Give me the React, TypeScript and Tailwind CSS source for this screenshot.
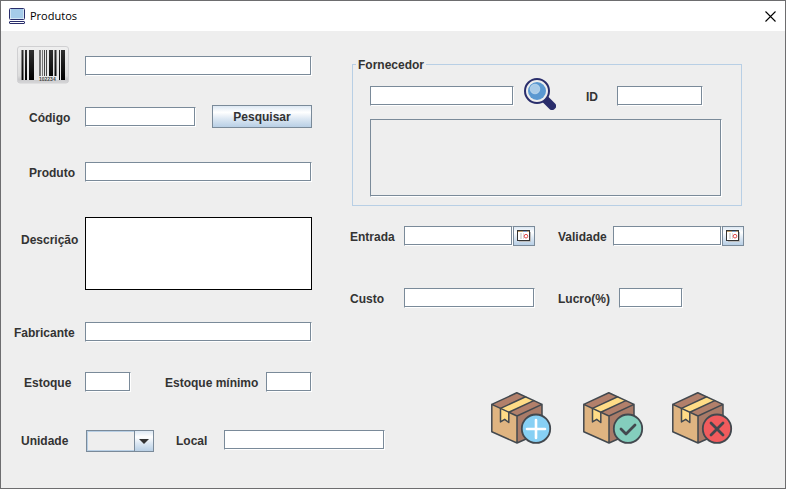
import type { ComponentProps, ReactNode } from "react";

const face =
  "bg-[linear-gradient(to_bottom,#dde8f3_0%,#ffffff_30%,#dde8f3_60%,#b8cfe5_100%)] border border-[#7a8a99]";

const etched =
  "border border-t-[#7a8a99] border-l-[#7a8a99] border-r-white border-b-white shadow-[inset_-1px_-1px_0_#7a8a99]";

function Field({ className = "", ...rest }: ComponentProps<"input">) {
  return (
    <input
      type="text"
      className={`block h-5 min-w-0 rounded-none bg-white px-1 outline-none ${etched} ${className}`}
      {...rest}
    />
  );
}

function Label({ htmlFor, className = "", children }: { htmlFor: string; className?: string; children: ReactNode }) {
  return (
    <label htmlFor={htmlFor} className={`block h-5 shrink-0 leading-[22px] whitespace-nowrap ${className}`}>
      {children}
    </label>
  );
}

function ComputerIcon() {
  return (
    <svg width="16" height="16" viewBox="0 0 16 16" aria-hidden="true">
      <rect x="0.5" y="0.5" width="15" height="11" rx="1" fill="#fff" stroke="#292d6b" />
      <rect x="1.5" y="1" width="13" height="9.5" fill="#a5cbe9" />
      <rect x="0.5" y="13.5" width="15" height="2" rx="0.5" fill="#fff" stroke="#292d6b" />
    </svg>
  );
}

function BarcodeIcon() {
  return (
    <svg width="52" height="40" viewBox="0 0 52 40" className="block shrink-0" role="img" aria-label="Código de barras">
      <defs>
        <linearGradient id="plate" x1="0" y1="0" x2="0" y2="1">
          <stop offset="0" stopColor="#f0f0f0" />
          <stop offset="0.8" stopColor="#dcdcdc" />
          <stop offset="0.9" stopColor="#c8c8ca" />
          <stop offset="1" stopColor="#d8d8da" />
        </linearGradient>
        <linearGradient id="bars" x1="0" y1="4" x2="0" y2="34" gradientUnits="userSpaceOnUse">
          <stop offset="0" stopColor="#303030" />
          <stop offset="1" stopColor="#000" />
        </linearGradient>
      </defs>
      <rect x="0.5" y="0.5" width="51" height="36.5" rx="2.5" fill="url(#plate)" stroke="#d0d0d2" />
      <path d="M4 4h44v30H4z" fill="#e8e8e8" />
      <path
        d="M4.5 4h2v30h-2zM8 4h2v30H8zM12 4h5v30h-5zM32 4h4v26h-4zM37.5 4h2v26h-2zM42 4h1v30h-1zM44 4h4v30h-4z"
        fill="url(#bars)"
      />
      <path d="M22 4h2v26h-2zM25 4h1v26h-1z" fill="#777" />
      <path d="M27 4h1v26h-1zM29 4h1v26h-1z" fill="#444" />
      <text x="22" y="35" fontSize="5" fontWeight="bold" fill="#444">
        102234
      </text>
    </svg>
  );
}

function MagnifierIcon() {
  return (
    <svg width="32" height="32" viewBox="0 0 32 32" aria-hidden="true">
      <path d="M21.5 21.5L28 28" stroke="#292d6b" strokeWidth="8" strokeLinecap="round" />
      <circle cx="13" cy="13" r="12" fill="#eee" stroke="#292d6b" strokeWidth="2" />
      <circle cx="13" cy="13" r="9" fill="#5a98d1" />
      <circle cx="11" cy="11" r="4.8" fill="#a9cbe8" stroke="#c3dbef" strokeWidth="0.7" />
    </svg>
  );
}

function CalendarIcon() {
  return (
    <svg width="14" height="12" viewBox="0 0 14 12" className="shrink-0" aria-hidden="true">
      <path d="M2 11.5h11.5V2" fill="none" stroke="#bbb" />
      <rect x="0.5" y="0.5" width="12" height="10" fill="#fff" stroke="#333" />
      <path d="M1 1h11v1H1z" fill="#c0a070" />
      <path d="M6 1h4v1H6z" fill="#7a9cc8" />
      <path d="M3 3h2v6H3zM6 3h1v6H6z" fill="#ddd" />
      <circle cx="9" cy="6.2" r="1.8" fill="#fff" stroke="#e04848" />
    </svg>
  );
}

function BoxIcon({ badge, children }: { badge: string; children: ReactNode }) {
  return (
    <svg width="64" height="56" viewBox="0 0 64 56" aria-hidden="true" strokeLinejoin="round" strokeLinecap="round">
      <path d="M2.8 14.4L28 26V53L2.8 41.8z" fill="#dfb481" />
      <path d="M28 26L53 14.4V42L28 53z" fill="#a97b68" />
      <path d="M2.8 14.4L27.8 2.8L53 14.4L28 26z" fill="#b2806b" />
      <path d="M11.5 18.4L36.6 6.8L44.8 10.6L19.8 22.2V32.5l-4.1-3.2-4.2 2.6z" fill="#ffdc86" />
      <g fill="none" stroke="#42484e" strokeWidth="1.5">
        <path d="M2.8 14.4L27.8 2.8L53 14.4V42L28 53L2.8 41.8zL28 26L53 14.4M28 26V53" />
        <path d="M11.5 18.4L36.6 6.8M19.8 22.2L44.8 10.6M11.5 18.4V31.9l4.2-2.6 4.1 3.2V22.2" />
      </g>
      <circle cx="47" cy="38.7" r="14.2" fill={badge} stroke="#42484e" strokeWidth="1.8" />
      {children}
    </svg>
  );
}

function DateField({ id, label, labelClass }: { id: string; label: string; labelClass: string }) {
  return (
    <>
      <Label htmlFor={id} className={labelClass}>
        {label}
      </Label>
      <Field id={id} className="w-0 flex-1" />
      <button
        type="button"
        aria-label={`Escolher data de ${label}`}
        className={`flex h-5 w-[22px] shrink-0 items-center justify-center ${face}`}
      >
        <CalendarIcon />
      </button>
    </>
  );
}

export default function App() {
  return (
    <div className="flex min-h-screen flex-col border border-[#6d6d6f] bg-[#eeeeee] font-['Liberation_Sans',Arial,sans-serif] text-xs font-bold text-[#333333]">
      <header className="flex h-[30px] shrink-0 items-center gap-[5px] bg-white pr-[9px] pl-2 text-black">
        <ComputerIcon />
        <h1 className="flex-1 font-['Open_Sans','Noto_Sans',sans-serif] text-[11px] font-normal">Produtos</h1>
        <button type="button" aria-label="Fechar">
          <svg width="11" height="11" viewBox="0 0 11 11" className="block" aria-hidden="true">
            <path d="M0.5 0.5l10 10M10.5 0.5l-10 10" stroke="#000" strokeWidth="1.1" />
          </svg>
        </button>
      </header>

      <main className="pb-9">
        <div className="grid grid-cols-[minmax(0,311fr)_minmax(0,395fr)] gap-x-[37px] pr-[41px]">
          <section className="pt-[15px]">
            <div className="flex items-center">
              <div className="w-[84px] shrink-0 pl-4">
                <BarcodeIcon />
              </div>
              <Field aria-label="Código de barras" className="w-0 flex-1" />
            </div>

            <div className="mt-[19px] flex items-start">
              <div className="flex flex-1 pt-0.5">
                <Label htmlFor="codigo" className="w-[84px] pl-7">
                  Código
                </Label>
                <Field id="codigo" className="w-0 flex-1" />
              </div>
              <button type="button" className={`ml-4 h-[23px] w-[100px] shrink-0 leading-5 ${face}`}>
                Pesquisar
              </button>
            </div>

            <div className="mt-[34px] flex">
              <Label htmlFor="produto" className="w-[84px] pl-7">
                Produto
              </Label>
              <Field id="produto" className="w-0 flex-1" />
            </div>

            <div className="mt-[35px] flex">
              <Label htmlFor="descricao" className="mt-3 w-[84px] pl-5">
                Descrição
              </Label>
              <textarea
                id="descricao"
                className="block h-[73px] w-0 min-w-0 flex-1 resize-none border border-black bg-white p-1 outline-none"
              />
            </div>

            <div className="mt-8 flex">
              <Label htmlFor="fabricante" className="w-[84px] pl-[13px]">
                Fabricante
              </Label>
              <Field id="fabricante" className="w-0 flex-1" />
            </div>
          </section>

          <section className="pt-[26px]">
            <fieldset className="mr-0.5 ml-[3px] min-w-0 border border-[#b8cfe5] px-[3px] pb-2">
              <legend className="h-[15px] px-0.5 leading-4">Fornecedor</legend>
              <div className="pt-1.5 pr-4 pl-[14px]">
                <div className="flex items-start pr-[19px]">
                  <Field aria-label="Buscar fornecedor" className="mt-2 w-0 flex-1" />
                  <button type="button" aria-label="Pesquisar fornecedor" className="ml-[10px] shrink-0">
                    <MagnifierIcon />
                  </button>
                  <Label htmlFor="fornecedor-id" className="mt-2 w-[61px] pl-[30px]">
                    ID
                  </Label>
                  <Field id="fornecedor-id" className="mt-2 w-[86px]" />
                </div>
                <div role="region" aria-label="Lista de fornecedores" className={`mt-[9px] h-[78px] ${etched}`} />
              </div>
            </fieldset>

            <div className="mt-5 flex">
              <DateField id="entrada" label="Entrada" labelClass="w-[55px] pl-px" />
              <DateField id="validade" label="Validade" labelClass="w-[78px] pl-[23px]" />
            </div>

            <div className="mt-[42px] flex pr-[61px]">
              <Label htmlFor="custo" className="w-[55px] pl-px">
                Custo
              </Label>
              <Field id="custo" className="w-0 flex-1" />
              <Label htmlFor="lucro" className="w-[84px] pl-[23px]">
                Lucro(%)
              </Label>
              <Field id="lucro" className="w-16" />
            </div>
          </section>
        </div>

        <div className="mt-[30px] grid grid-cols-[minmax(0,384fr)_minmax(0,245fr)] gap-x-[104px] pr-[51px]">
          <section>
            <div className="flex">
              <Label htmlFor="estoque" className="w-[84px] pl-[23px]">
                Estoque
              </Label>
              <Field id="estoque" className="w-[46px]" />
              <Label htmlFor="estoque-minimo" className="w-[135px] pl-[34px]">
                Estoque mínimo
              </Label>
              <Field id="estoque-minimo" className="w-[46px]" />
            </div>

            <div className="mt-[38px] flex">
              <Label htmlFor="unidade" className="w-[85px] pl-5">
                Unidade
              </Label>
              <div className="relative h-[22px] w-[68px] shrink-0">
                <select
                  id="unidade"
                  className="block h-full w-full appearance-none rounded-none border border-[#7a8a99] bg-[#eeeeee] pr-5 pl-1 shadow-[inset_0_0_0_1px_#b8cfe5] outline-none"
                >
                  <option value="" />
                </select>
                <span
                  className={`pointer-events-none absolute inset-y-0 right-0 flex w-5 items-center justify-center ${face}`}
                >
                  <svg width="10" height="5" viewBox="0 0 10 5" aria-hidden="true">
                    <path d="M0 0h10L5 5z" fill="#333" />
                  </svg>
                </span>
              </div>
              <Label htmlFor="local" className="w-[70px] pl-[22px]">
                Local
              </Label>
              <Field id="local" className="w-0 flex-1" />
            </div>
          </section>

          <section className="flex items-start pt-[18px]">
            <button type="button" aria-label="Adicionar produto">
              <BoxIcon badge="#87d0f4">
                <path d="M47 30v18M38 39h18" stroke="#fff" strokeWidth="2.6" />
              </BoxIcon>
            </button>
            <button type="button" aria-label="Salvar produto" className="ml-7">
              <BoxIcon badge="#84cebd">
                <path d="M40 39l5 5L54 35" fill="none" stroke="#42484e" strokeWidth="2.8" />
              </BoxIcon>
            </button>
            <button type="button" aria-label="Excluir produto" className="ml-[25px]">
              <BoxIcon badge="#f15b5d">
                <path d="M41 33l12 12M53 33l-12 12" stroke="#42484e" strokeWidth="2.8" />
              </BoxIcon>
            </button>
          </section>
        </div>
      </main>
    </div>
  );
}
